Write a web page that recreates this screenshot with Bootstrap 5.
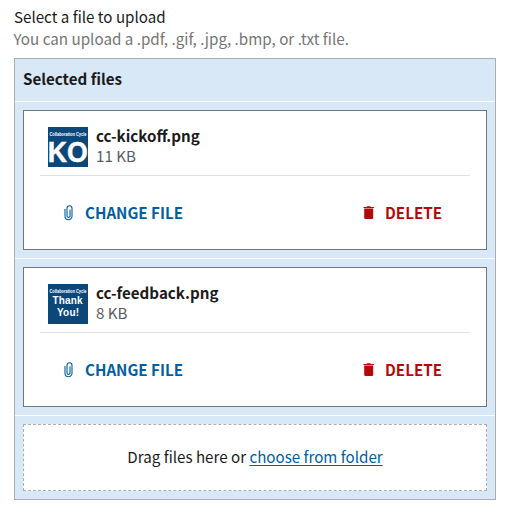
<!DOCTYPE html>
<html lang="en">
<head>
<meta charset="utf-8">
<meta name="viewport" content="width=device-width, initial-scale=1">
<title>File upload</title>
<link href="https://cdn.jsdelivr.net/npm/bootstrap@5.3.0/dist/css/bootstrap.min.css" rel="stylesheet">
<style>
  body { font-family: "Source Sans Pro", "Noto Sans CJK SC", sans-serif; font-size: 15.15px; line-height: 22px; color: #1b1b1b; background: #fff; }
  .upload { width: 482px; margin: 5px 0 0 14px; }
  .hint { color: #757575; font-size: 15.2px; margin-left: -.5px; }
  .file-panel { margin-top: 9px; background: #d9e8f6; border: 1px solid #a9aeb1; }
  .panel-head { height: 42px; padding: 0 0 4px 8px; }
  .panel-row { border-top: 1px solid #fff; padding: 8px; }
  .file-box { height: 140px; border: 1px solid #71767a; background: #fff; padding: 16px; }
  .file-info { height: 49px; padding: 0 8px 8px; border-bottom: 1px solid #dfe1e2; line-height: 20px; gap: 8px; }
  .file-info svg { overflow: visible; }
  .file-label { margin-top: -2px; }
  .file-size { color: #565c65; }
  .file-actions { padding: 25px 28px 0 23px; line-height: 22px; }
  .file-actions svg { margin-top: 2px; }
  .change { color: #005ea2; gap: 10px; }
  .delete { color: #b50909; gap: 10px; }
  .drop-zone { height: 67px; padding-bottom: 4px; border: 1px dashed #a9aeb1; background: #fff; }
  .drop-zone a { color: #005ea2; text-underline-offset: 2px; text-decoration-thickness: 1px; }
</style>
</head>
<body>
<main class="upload">
  <div>Select a file to upload</div>
  <div class="hint">You can upload a .pdf, .gif, .jpg, .bmp, or .txt file.</div>
  <section class="file-panel">
    <div class="panel-head d-flex align-items-center fw-bold">Selected files</div>
    <div class="panel-row">
      <div class="file-box">
        <div class="file-info d-flex">
          <svg width="40" height="40" viewBox="0 0 40 40" font-family="Liberation Sans, sans-serif" font-weight="700" fill="#fff" text-anchor="middle">
            <rect width="40" height="40" fill="#0b4778"/>
            <text x="20" y="8.5" font-size="4.5" textLength="37" lengthAdjust="spacingAndGlyphs">Collaboration Cycle</text>
            <text x="19.800" y="35" font-size="29" stroke="#fff" stroke-width=".5" textLength="40" lengthAdjust="spacingAndGlyphs">KO</text>
          </svg>
          <div class="file-label"><div class="fw-bold">cc-kickoff.png</div><div class="file-size">11 KB</div></div>
        </div>
        <div class="file-actions d-flex justify-content-between fw-bold">
          <span class="change d-flex align-items-center">
            <svg width="12" height="16" viewBox="0 0 12 16" fill="none" stroke="currentColor" stroke-width="1.1"><path d="M2 4V11.200a3.500 3.500 0 0 0 7 0V3.300a2.500 2.500 0 0 0-5 0V10.900a1.500 1.500 0 0 0 3 0V4.500"/></svg>
            <span>CHANGE FILE</span>
          </span>
          <span class="delete d-flex align-items-center">
            <svg width="12" height="16" viewBox="0 0 12 16" fill="currentColor"><path d="M.5 2h3l.7-.8h3l.7.8h3v1.100H.5zM1.200 3.600h9v9.200a1.200 1.200 0 0 1-1.200 1.200H2.400a1.200 1.200 0 0 1-1.200-1.200z"/></svg>
            <span>DELETE</span>
          </span>
        </div>
      </div>
    </div>
    <div class="panel-row">
      <div class="file-box">
        <div class="file-info d-flex">
          <svg width="40" height="40" viewBox="0 0 40 40" font-family="Liberation Sans, sans-serif" font-weight="700" fill="#fff" text-anchor="middle">
            <rect width="40" height="40" fill="#0b4778"/>
            <text x="20" y="8.500" font-size="4.5" textLength="37" lengthAdjust="spacingAndGlyphs">Collaboration Cycle</text>
            <text x="19.500" y="20" font-size="10" textLength="30">Thank</text>
            <text x="20" y="32" font-size="10" textLength="22">You!</text>
          </svg>
          <div class="file-label"><div class="fw-bold">cc-feedback.png</div><div class="file-size">8 KB</div></div>
        </div>
        <div class="file-actions d-flex justify-content-between fw-bold">
          <span class="change d-flex align-items-center">
            <svg width="12" height="16" viewBox="0 0 12 16" fill="none" stroke="currentColor" stroke-width="1.1"><path d="M2 4V11.200a3.500 3.500 0 0 0 7 0V3.300a2.500 2.500 0 0 0-5 0V10.900a1.500 1.500 0 0 0 3 0V4.500"/></svg>
            <span>CHANGE FILE</span>
          </span>
          <span class="delete d-flex align-items-center">
            <svg width="12" height="16" viewBox="0 0 12 16" fill="currentColor"><path d="M.5 2h3l.7-.8h3l.7.8h3v1.100H.5zM1.200 3.600h9v9.200a1.200 1.200 0 0 1-1.200 1.200H2.400a1.200 1.200 0 0 1-1.200-1.200z"/></svg>
            <span>DELETE</span>
          </span>
        </div>
      </div>
    </div>
    <div class="panel-row">
      <div class="drop-zone d-flex align-items-center justify-content-center">
        <span>Drag files here or <a href="#">choose from folder</a></span>
      </div>
    </div>
  </section>
</main>
<script src="https://cdn.jsdelivr.net/npm/bootstrap@5.3.0/dist/js/bootstrap.bundle.min.js"></script>
</body>
</html>
